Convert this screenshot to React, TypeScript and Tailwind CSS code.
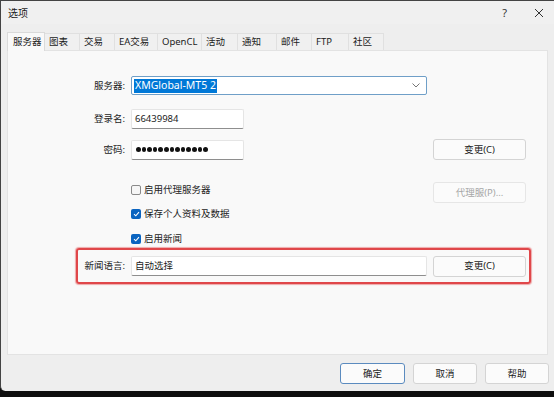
import React from 'react';

const font = { fontFamily: '"Noto Sans", "Noto Sans CJK SC", sans-serif' };

const tabs = [
  { label: '服务器', w: 'w-[38px]' },
  { label: '图表', w: 'w-[35px]' },
  { label: '交易', w: 'w-[35px]' },
  { label: 'EA交易', w: 'w-[43px]' },
  { label: 'OpenCL', w: 'w-[44px]' },
  { label: '活动', w: 'w-[36px]' },
  { label: '通知', w: 'w-[39px]' },
  { label: '邮件', w: 'w-[35px]' },
  { label: 'FTP', w: 'w-[37px]' },
  { label: '社区', w: 'w-[35px]' },
];

function Button({ children, disabled, focused }: { children: React.ReactNode; disabled?: boolean; focused?: boolean }) {
  return (
    <button
      className={`w-full h-[21px] rounded-[3px] border bg-[#fbfbfb] flex items-center justify-center ${
        disabled ? 'border-[#e6e6e6] text-[#a6a6a6]' : focused ? 'border-[#5b8bbf] text-[#1b1b1b]' : 'border-[#d4d4d4] text-[#1b1b1b]'
      }`}
    >
      {children}
    </button>
  );
}

function Checkbox({ checked, label }: { checked?: boolean; label: string }) {
  return (
    <div className="flex items-center h-[16px] gap-[3px]">
      {checked ? (
        <span className="w-[10px] h-[10px] rounded-[2px] bg-[#0a64c0] flex items-center justify-center">
          <svg width="7" height="6" viewBox="0 0 7 6">
            <path d="M1 3.2 L2.8 4.8 L6 1.2" fill="none" stroke="white" strokeWidth="1.1" />
          </svg>
        </span>
      ) : (
        <span className="w-[10px] h-[10px] rounded-[2px] border border-[#8a8a8a] bg-[#f6f6f6]" />
      )}
      <span className="text-[#1b1b1b]">{label}</span>
    </div>
  );
}

function TextBox({ children, w }: { children?: React.ReactNode; w: string }) {
  return (
    <div className={`${w} h-[20px] bg-white border border-[#e5e5e5] border-b-[#8e8e8e] rounded-[2px] flex items-center px-[3px] text-[#1b1b1b]`}>
      {children}
    </div>
  );
}

export default function App() {
  return (
    <div className="w-[554px] h-[397px] bg-[#0e0e0e] overflow-hidden text-[9.5px] leading-none" style={font}>
      <div className="w-[554px] h-[391px] bg-[#eeeeee] border-t border-l border-[#444444] rounded-bl-[5px] flex flex-col">
        {/* Title bar */}
        <div className="h-[23px] flex items-center pl-[7px] pr-[10px] bg-[#f0f0f0]">
          <span className="text-[10px] text-[#1b1b1b]">选项</span>
          <span className="ml-auto text-[11px] text-[#333]">?</span>
          <svg className="ml-[27px]" width="10" height="10" viewBox="0 0 10 10">
            <path d="M1 1 L9 9 M9 1 L1 9" stroke="#333" strokeWidth="1" />
          </svg>
        </div>

        {/* Tabs */}
        <div className="mt-[8px] ml-[6px] flex items-end h-[18px] relative z-10">
          {tabs.map((t, i) =>
            i === 0 ? (
              <div key={t.label} className={`${t.w} h-[19px] -mb-[1px] bg-[#f9f9f9] border border-b-0 border-[#dadada] flex items-center pl-[5px] text-[#1b1b1b]`}>
                {t.label}
              </div>
            ) : (
              <div key={t.label} className={`${t.w} h-[17px] bg-[#f0f0f0] border border-l-0 border-b-0 border-[#e0e0e0] flex items-center pl-[4px] text-[#1b1b1b]`}>
                {t.label}
              </div>
            )
          )}
        </div>

        {/* Panel */}
        <div className="ml-[6px] w-[541px] h-[305px] bg-[#f9f9f9] border border-[#e3e3e3] flex flex-col pt-[25px] pr-[21px]">
          <div className="flex items-center h-[19px]">
            <span className="w-[117px] text-right text-[#1b1b1b]">服务器:</span>
            <div className="ml-[6px] w-[296px] h-[19px] bg-white border border-[#6f9fc8] rounded-[2px] flex items-center pl-[2px] pr-[6px]">
              <span className="bg-[#0078d7] text-white text-[10.5px] h-[14px] flex items-center px-[1px]">XMGlobal-MT5 2</span>
              <svg className="ml-auto" width="8" height="5" viewBox="0 0 8 5">
                <path d="M0.5 0.5 L4 4 L7.5 0.5" fill="none" stroke="#666" strokeWidth="0.9" />
              </svg>
            </div>
          </div>

          <div className="flex items-center h-[19px] mt-[14px]">
            <span className="w-[117px] text-right text-[#1b1b1b]">登录名:</span>
            <div className="ml-[6px]">
              <TextBox w="w-[113px]">66439984</TextBox>
            </div>
          </div>

          <div className="flex items-center h-[21px] mt-[11px]">
            <span className="w-[117px] text-right text-[#1b1b1b]">密码:</span>
            <div className="ml-[6px]">
              <TextBox w="w-[113px]">
                <div className="flex gap-[1px] pl-[1px]">
                  {Array.from({ length: 13 }).map((_, i) => (
                    <span key={i} className="w-[4.6px] h-[4.6px] rounded-full bg-[#111]" />
                  ))}
                </div>
              </TextBox>
            </div>
            <div className="ml-auto w-[93px]">
              <Button>变更(C)</Button>
            </div>
          </div>

          <div className="flex items-start h-[21px] mt-[22px]">
            <div className="ml-[123px]">
              <Checkbox label="启用代理服务器" />
            </div>
            <div className="ml-auto w-[93px]">
              <Button disabled>代理服(P)...</Button>
            </div>
          </div>

          <div className="mt-[3px] ml-[123px]">
            <Checkbox checked label="保存个人资料及数据" />
          </div>

          <div className="mt-[9px] ml-[123px]">
            <Checkbox checked label="启用新闻" />
          </div>

          <div className="mt-[1px] ml-[68px] w-[455px] h-[36px] border-2 border-[#e0474a] rounded-[3px] shadow-[0_0_1px_1px_rgba(224,71,74,0.45)] flex items-center pr-[3px]">
            <span className="w-[47px] text-right text-[#1b1b1b]">新闻语言:</span>
            <div className="ml-[6px]">
              <TextBox w="w-[296px]">自动选择</TextBox>
            </div>
            <div className="ml-[6px] w-[93px]">
              <Button>变更(C)</Button>
            </div>
          </div>
        </div>

        {/* Footer buttons */}
        <div className="mt-[8px] flex justify-end gap-[8px] pr-[5px]">
          <div className="w-[65px]">
            <Button focused>确定</Button>
          </div>
          <div className="w-[64px]">
            <Button>取消</Button>
          </div>
          <div className="w-[64px]">
            <Button>帮助</Button>
          </div>
        </div>
      </div>
    </div>
  );
}
